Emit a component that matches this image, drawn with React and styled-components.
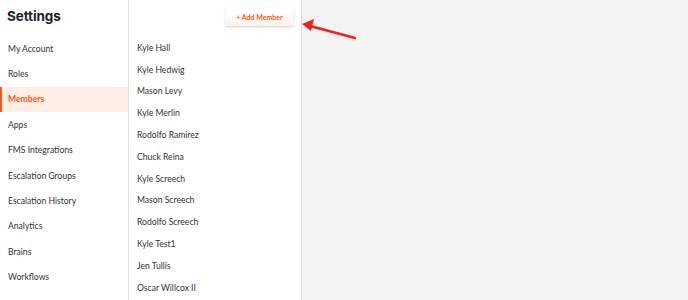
import styled, { createGlobalStyle } from 'styled-components';

const GlobalStyle = createGlobalStyle`
  html, body {
    margin: 0;
    padding: 0;
    background: #f3f3f3;
  }
  body {
    font-family: 'Lato', 'Open Sans', sans-serif;
  }
`;

const Page = styled.div`
  position: relative;
  display: flex;
  width: 688px;
  height: 300px;
  overflow: hidden;
  background: #f3f3f3;
`;

const Sidebar = styled.nav`
  width: 128px;
  flex-shrink: 0;
  background: #ffffff;
  border-right: 1px solid #e2e2e2;
`;

const Title = styled.h1`
  margin: 0;
  padding: 8px 0 0 7px;
  height: 34px;
  box-sizing: border-box;
  font-family: 'Inter', sans-serif;
  font-size: 13.5px;
  font-weight: 700;
  letter-spacing: -0.1px;
  color: #222222;
`;

const NavList = styled.ul`
  list-style: none;
  margin: 0;
  padding: 2px 0 0;
`;

const NavItem = styled.li`
  height: 25.4px;
  display: flex;
  align-items: center;
  padding-left: 6px;
  font-size: 8.6px;
  color: ${p => (p.active ? '#f15a22' : '#333333')};
  font-weight: ${p => (p.active ? 700 : 400)};
  background: ${p => (p.active ? '#fdeee6' : 'transparent')};
  border-left: 2px solid ${p => (p.active ? '#f15a22' : 'transparent')};
  box-sizing: border-box;
`;

const MembersPanel = styled.section`
  width: 172px;
  flex-shrink: 0;
  background: #ffffff;
  border-right: 1px solid #dcdcdc;
  display: flex;
  flex-direction: column;
`;

const Toolbar = styled.div`
  display: flex;
  justify-content: flex-end;
  padding: 8px 7px 0 0;
`;

const AddButton = styled.button`
  width: 69px;
  height: 18px;
  border: none;
  border-radius: 2px;
  background: linear-gradient(#ffffff 30%, #fdf0e8);
  box-shadow: 0 1px 2px rgba(0, 0, 0, 0.18);
  color: #f15a22;
  font-family: 'Lato', sans-serif;
  font-size: 7px;
  font-weight: 700;
  padding: 0;
  cursor: pointer;
`;

const MemberList = styled.ul`
  list-style: none;
  margin: 0;
  padding: 11px 0 0 8px;
`;

const Member = styled.li`
  height: 21.8px;
  display: flex;
  align-items: center;
  font-size: 8.6px;
  color: #333333;
`;

const Arrow = styled.svg`
  position: absolute;
  left: 296px;
  top: 14px;
`;

const navItems = [
  'My Account',
  'Roles',
  'Members',
  'Apps',
  'FMS Integrations',
  'Escalation Groups',
  'Escalation History',
  'Analytics',
  'Brains',
  'Workflows',
];

const members = [
  'Kyle Hall',
  'Kyle Hedwig',
  'Mason Levy',
  'Kyle Merlin',
  'Rodolfo Ramirez',
  'Chuck Reina',
  'Kyle Screech',
  'Mason Screech',
  'Rodolfo Screech',
  'Kyle Test1',
  'Jen Tullis',
  'Oscar Willcox II',
];

export default function App() {
  return (
    <>
      <GlobalStyle />
      <Page>
        <Sidebar>
          <Title>Settings</Title>
          <NavList>
            {navItems.map(item => (
              <NavItem key={item} active={item === 'Members'}>
                {item}
              </NavItem>
            ))}
          </NavList>
        </Sidebar>
        <MembersPanel>
          <Toolbar>
            <AddButton>+ Add Member</AddButton>
          </Toolbar>
          <MemberList>
            {members.map(name => (
              <Member key={name}>{name}</Member>
            ))}
          </MemberList>
        </MembersPanel>
        <Arrow width="64" height="30" viewBox="0 0 64 30">
          <line x1="59" y1="24" x2="14" y2="12" stroke="#f0201a" strokeWidth="2.4" strokeLinecap="round" />
          <polygon points="6,10 18,5 15,17" fill="#f0201a" />
        </Arrow>
      </Page>
    </>
  );
}
